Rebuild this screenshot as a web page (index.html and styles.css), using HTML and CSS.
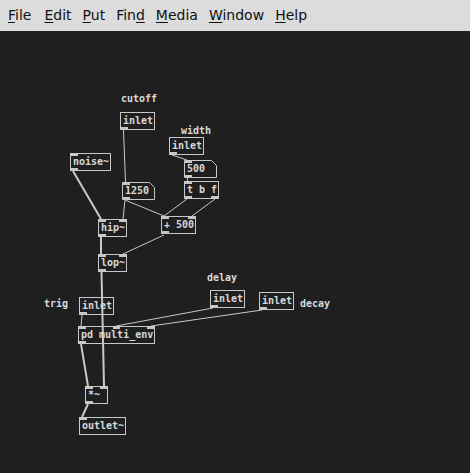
FILE: index.html
```html
<!DOCTYPE html>
<html>
<head>
<meta charset="utf-8">
<link rel="stylesheet" href="styles.css">
</head>
<body>
<nav class="menubar">
  <span class="item first"><u>F</u>ile</span>
  <span class="item"><u>E</u>dit</span>
  <span class="item"><u>P</u>ut</span>
  <span class="item">Fin<u>d</u></span>
  <span class="item"><u>M</u>edia</span>
  <span class="item"><u>W</u>indow</span>
  <span class="item"><u>H</u>elp</span>
</nav>
<main class="canvas">
  <svg class="wires" viewBox="0 31 470 442" width="470" height="442">
    <!-- message box outlines -->
    <polygon class="msgshape" points="122.5,182.5 149.5,182.5 154.5,187.5 154.5,199.5 122.5,199.5"/>
    <polygon class="msgshape" points="184.5,160.5 211.5,160.5 216.5,165.5 216.5,177.5 184.5,177.5"/>
    <!-- control connections -->
    <line class="ctl" x1="123.5" y1="130" x2="125.5" y2="182"/>
    <line class="ctl" x1="172" y1="155" x2="187" y2="160"/>
    <line class="ctl" x1="187.5" y1="178" x2="187.5" y2="181"/>
    <line class="ctl" x1="125" y1="200" x2="123" y2="219"/>
    <line class="ctl" x1="125" y1="200" x2="164" y2="216"/>
    <line class="ctl" x1="187" y1="199" x2="164" y2="216"/>
    <line class="ctl" x1="215" y1="199" x2="192" y2="216"/>
    <line class="ctl" x1="164" y1="235" x2="123" y2="254"/>
    <line class="ctl" x1="82" y1="315" x2="81" y2="326"/>
    <line class="ctl" x1="213" y1="308" x2="116" y2="326"/>
    <line class="ctl" x1="262" y1="310" x2="151" y2="326"/>
    <!-- signal connections -->
    <line class="sig" x1="73" y1="171" x2="101" y2="219"/>
    <line class="sig" x1="101" y1="237" x2="101" y2="254"/>
    <line class="sig" x1="101.5" y1="272" x2="104" y2="386"/>
    <line class="sig" x1="81" y1="344" x2="88" y2="386"/>
    <line class="sig" x1="88" y1="404" x2="82" y2="417"/>
  </svg>

  <div class="comment" style="left:121px;top:92px">cutoff</div>
  <div class="comment" style="left:181px;top:124px">width</div>
  <div class="comment" style="left:207px;top:271px">delay</div>
  <div class="comment" style="left:44px;top:297px">trig</div>
  <div class="comment" style="left:300px;top:297px">decay</div>

  <div class="obj" style="left:120px;top:112px;width:35px">inlet<span class="nub out l"></span></div>
  <div class="obj" style="left:169px;top:137px;width:35px">inlet<span class="nub out l"></span></div>
  <div class="obj" style="left:70px;top:153px;width:41px">noise~<span class="nub in l"></span><span class="nub out l"></span></div>
  <div class="msg" style="left:122px;top:182px;width:33px">1250<span class="nub in l"></span><span class="nub out l"></span></div>
  <div class="msg" style="left:184px;top:160px;width:33px">500<span class="nub in l"></span><span class="nub out l"></span></div>
  <div class="obj" style="left:184px;top:181px;width:35px">t b f<span class="nub in l"></span><span class="nub out l"></span><span class="nub out r"></span></div>
  <div class="obj" style="left:161px;top:216px;width:35px">+ 500<span class="nub in l"></span><span class="nub in r"></span><span class="nub out l"></span></div>
  <div class="obj" style="left:98px;top:219px;width:29px">hip~<span class="nub in l"></span><span class="nub in r"></span><span class="nub out l"></span></div>
  <div class="obj" style="left:98px;top:254px;width:29px">lop~<span class="nub in l"></span><span class="nub in r"></span><span class="nub out l"></span></div>
  <div class="obj" style="left:210px;top:290px;width:35px">inlet<span class="nub out l"></span></div>
  <div class="obj" style="left:259px;top:292px;width:35px">inlet<span class="nub out l"></span></div>
  <div class="obj" style="left:79px;top:297px;width:35px">inlet<span class="nub out l"></span></div>
  <div class="obj" style="left:78px;top:326px;width:77px">pd multi_env<span class="nub in l"></span><span class="nub in m"></span><span class="nub in r"></span><span class="nub out l"></span></div>
  <div class="obj" style="left:85px;top:386px;width:23px">*~<span class="nub in l"></span><span class="nub in r"></span><span class="nub out l"></span></div>
  <div class="obj" style="left:79px;top:417px;width:47px">outlet~<span class="nub in l"></span></div>
</main>
</body>
</html>
```
FILE: styles.css
```css
html, body {
  margin: 0;
  padding: 0;
  width: 470px;
  height: 473px;
  overflow: hidden;
  background: #1f1f1f;
}

.menubar {
  height: 31px;
  box-sizing: border-box;
  background: #dcdcdc;
  display: flex;
  align-items: center;
  gap: 11px;
  padding: 0 0 1px 8px;
  font-family: "DejaVu Sans", sans-serif;
  font-size: 14px;
  color: #111;
}

.menubar .item {
  white-space: nowrap;
}

.menubar .first {
  margin-right: 2px;
}

.menubar u {
  text-decoration-thickness: 1px;
  text-underline-offset: 2px;
}

.canvas {
  position: relative;
  height: 442px;
  background: #1f1f1f;
  font-family: "DejaVu Sans Mono", monospace;
  font-weight: bold;
  font-size: 10px;
  color: #d8d8d8;
}

.wires {
  position: absolute;
  left: 0;
  top: 0;
}

.ctl {
  stroke: #c8c8c8;
  stroke-width: 1;
}

.sig {
  stroke: #c8c8c8;
  stroke-width: 2;
}

.msgshape {
  fill: none;
  stroke: #c8c8c8;
  stroke-width: 1;
}

.obj, .msg, .comment {
  position: absolute;
  box-sizing: border-box;
  height: 18px;
  line-height: 16px;
  white-space: pre;
  margin-top: -31px;
}

.obj {
  border: 1px solid #c8c8c8;
  padding-left: 2px;
}

.msg {
  border: 1px solid transparent;
  padding-left: 2px;
}

.comment {
  line-height: 14px;
  height: 14px;
}

.nub {
  position: absolute;
  width: 7px;
  height: 2px;
  background: #c8c8c8;
}

.nub.in { top: 0; }
.nub.out { bottom: 0; }
.nub.l { left: 0; }
.nub.r { right: 0; }
.nub.m { left: calc(50% - 4px); }
```
